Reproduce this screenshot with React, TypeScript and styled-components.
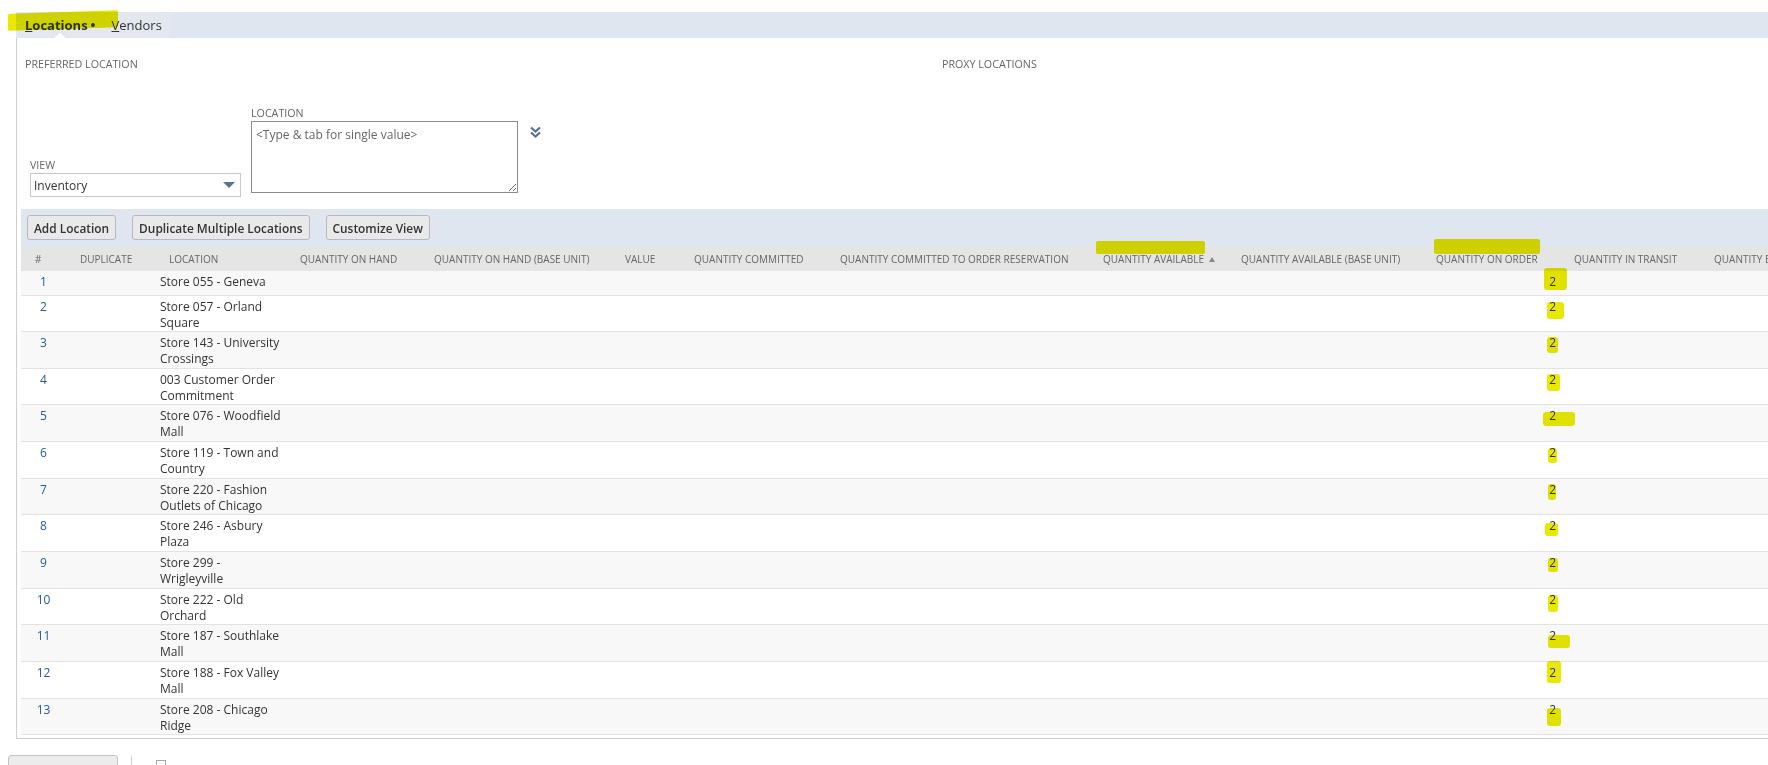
import React from "react";
import styled, { createGlobalStyle } from "styled-components";

const Global = createGlobalStyle`
  html, body { margin: 0; padding: 0; background: #fff; }
  body { font-family: "Open Sans", "Liberation Sans", Arial, sans-serif; color: #333; }
  * { box-sizing: border-box; }
`;

const Page = styled.div`
  position: relative;
  width: 1768px;
  height: 765px;
  overflow: hidden;
  padding-top: 12px;
`;

const TabBar = styled.div`
  margin-left: 16px;
  height: 26px;
  background: #dfe6ef;
  display: flex;
`;

const TabGroup = styled.div`
  width: 154px;
  background: #e3e7ee;
  display: flex;
  align-items: center;
  padding-left: 9px;
  gap: 16px;
`;

const Tab = styled.div<{ $active?: boolean }>`
  position: relative;
  height: 100%;
  display: flex;
  align-items: center;
  font-size: 13px;
  font-weight: ${(p) => (p.$active ? 700 : 400)};
  color: #333;
  white-space: nowrap;
  u { text-decoration: underline; text-underline-offset: 1px; }
  ${(p) =>
    p.$active &&
    `&::after {
      content: "";
      position: absolute;
      left: 29px;
      bottom: 0;
      border-left: 6px solid transparent;
      border-right: 6px solid transparent;
      border-bottom: 5px solid #fff;
    }`}
`;

const Dot = styled.span`
  margin-left: 3px;
  font-weight: 700;
`;

const Panel = styled.div`
  margin-left: 16px;
  border-left: 1px solid #cfcfcf;
  border-bottom: 1px solid #cfcfcf;
  padding: 0 0 3px 4px;
`;

const FormArea = styled.div`
  height: 171px;
  display: grid;
  grid-template-columns: 917px 1fr;
  padding-left: 4px;
`;

const FormCol = styled.div`
  display: flex;
  flex-direction: column;
  padding-top: 19px;
  padding-bottom: 12px;
`;

const SectionLabel = styled.div`
  font-size: 10.7px;
  line-height: 14px;
  color: #666;
  text-transform: uppercase;
`;

const FieldsRow = styled.div`
  margin-top: auto;
  display: flex;
  align-items: flex-end;
  padding-left: 5px;
  gap: 10px;
`;

const Field = styled.div<{ $lift?: number }>`
  display: flex;
  flex-direction: column;
  gap: 1px;
  margin-bottom: ${(p) => p.$lift ?? 0}px;
`;

const FieldLabel = styled.label`
  font-size: 10.7px;
  line-height: 14px;
  color: #666;
  text-transform: uppercase;
`;

const FakeSelect = styled.div`
  width: 211px;
  height: 24px;
  border: 1px solid #c8c8c8;
  display: flex;
  align-items: center;
  justify-content: space-between;
  padding: 0 4px 0 3px;
  font-size: 12px;
  color: #333;
`;

const Caret = styled.span`
  width: 0;
  height: 0;
  border-left: 6px solid transparent;
  border-right: 6px solid transparent;
  border-top: 6px solid #5b7290;
  margin-right: 1px;
`;

const TextArea = styled.textarea`
  width: 267px;
  height: 72px;
  border: 1px solid #8c8c8c;
  padding: 4px 4px;
  font-family: "Open Sans", "Liberation Sans", Arial, sans-serif;
  font-size: 12px;
  color: #333;
  resize: both;
  outline: none;
  &::placeholder { color: #666; }
`;

const ExpandIcon = styled.svg`
  align-self: flex-start;
  margin-top: 20px;
  margin-left: 2px;
`;

const ProxyCol = styled(FormCol)`
  padding-left: 0;
`;

const ButtonBar = styled.div`
  height: 37px;
  background: #dfe6ef;
  display: flex;
  align-items: center;
  gap: 16px;
  padding-left: 6px;
`;

const Button = styled.button`
  height: 25px;
  padding: 0 6px;
  border: 1px solid #b9b9b9;
  border-radius: 3px;
  background: #e9e9e9;
  font-family: "Open Sans", "Liberation Sans", Arial, sans-serif;
  font-size: 11.9px;
  font-weight: 600;
  color: #333;
  white-space: nowrap;
`;

const Table = styled.table`
  border-collapse: collapse;
  table-layout: fixed;
  width: 1883px;
`;

const Th = styled.th<{ $indent: number }>`
  height: 25px;
  background: #e5e5e5;
  font-size: 10px;
  font-weight: 400;
  color: #666;
  text-align: left;
  padding: 0 0 0 ${(p) => p.$indent}px;
  white-space: nowrap;
  overflow: hidden;
`;

const SortArrow = styled.span`
  display: inline-block;
  margin-left: 5px;
  width: 0;
  height: 0;
  border-left: 3px solid transparent;
  border-right: 3px solid transparent;
  border-bottom: 5px solid #888;
  vertical-align: 1px;
`;

const Tr = styled.tr<{ $odd: boolean; $tall: boolean }>`
  height: ${(p) => (p.$tall ? "36.67px" : "24px")};
  background: ${(p) => (p.$odd ? "#f8f8f8" : "#fff")};
  border-bottom: 1px solid #e3e3e3;
`;

const Td = styled.td<{ $align?: string }>`
  vertical-align: top;
  padding: 3px ${(p) => (p.$align === "right" ? "8px" : "0")} 0 ${(p) => (p.$align === "left" ? "10px" : "0")};
  text-align: ${(p) => p.$align ?? "left"};
  font-size: 12px;
  line-height: 16px;
  color: #333;
  white-space: nowrap;
`;

const NumCell = styled(Td)`
  text-align: center;
  padding-right: 4px;
  color: #255a9b;
`;

const Line = styled.div`
  white-space: nowrap;
`;

const Digit = styled.span`
  position: relative;
  display: inline-block;
`;

const Mark = styled.span`
  position: absolute;
  background: #e8e800;
  mix-blend-mode: multiply;
  border-radius: 3px;
  pointer-events: none;
`;

const Highlight = styled.div`
  position: absolute;
  background: #e8e800;
  mix-blend-mode: multiply;
  border-radius: 2px;
  pointer-events: none;
`;

const Footer = styled.div`
  display: flex;
  align-items: flex-start;
  padding: 16px 0 0 8px;
  gap: 13px;
`;

const FooterButton = styled.div`
  width: 110px;
  height: 20px;
  border: 1px solid #c4c4c4;
  border-radius: 3px;
  background: #ececec;
`;

const Separator = styled.div`
  width: 1px;
  height: 20px;
  margin-top: 1px;
  background: #cfcfcf;
`;

const SmallBox = styled.div`
  width: 10px;
  height: 10px;
  margin: 5px 0 0 11px;
  border: 1px solid #aaa;
`;

const columns: { label: string; width: number; indent: number; sorted?: boolean }[] = [
  { label: "#", width: 49, indent: 14 },
  { label: "DUPLICATE", width: 80, indent: 10 },
  { label: "LOCATION", width: 140, indent: 19 },
  { label: "QUANTITY ON HAND", width: 134, indent: 10 },
  { label: "QUANTITY ON HAND (BASE UNIT)", width: 191, indent: 10 },
  { label: "VALUE", width: 69, indent: 10 },
  { label: "QUANTITY COMMITTED", width: 146, indent: 10 },
  { label: "QUANTITY COMMITTED TO ORDER RESERVATION", width: 263, indent: 10 },
  { label: "QUANTITY AVAILABLE", width: 138, indent: 10, sorted: true },
  { label: "QUANTITY AVAILABLE (BASE UNIT)", width: 195, indent: 10 },
  { label: "QUANTITY ON ORDER", width: 138, indent: 10 },
  { label: "QUANTITY IN TRANSIT", width: 140, indent: 10 },
  { label: "QUANTITY BACK ORDERED", width: 200, indent: 10 },
];

type Row = { lines: string[]; mark: [number, number, number, number] };

const rows: Row[] = [
  { lines: ["Store 055 - Geneva"], mark: [-8, -14, 23, 22] },
  { lines: ["Store 057 - Orland", "Square"], mark: [-5, -5, 17, 17] },
  { lines: ["Store 143 - University", "Crossings"], mark: [-5, -6, 11, 16] },
  { lines: ["003 Customer Order", "Commitment"], mark: [-5, -6, 13, 17] },
  { lines: ["Store 076 - Woodfield", "Mall"], mark: [-9, -4, 32, 14] },
  { lines: ["Store 119 - Town and", "Country"], mark: [-4, -5, 9, 15] },
  { lines: ["Store 220 - Fashion", "Outlets of Chicago"], mark: [-4, -6, 8, 16] },
  { lines: ["Store 246 - Asbury", "Plaza"], mark: [-7, -3, 13, 13] },
  { lines: ["Store 299 -", "Wrigleyville"], mark: [-4, -5, 10, 14] },
  { lines: ["Store 222 - Old", "Orchard"], mark: [-4, -5, 10, 17] },
  { lines: ["Store 187 - Southlake", "Mall"], mark: [-4, -1, 22, 13] },
  { lines: ["Store 188 - Fox Valley", "Mall"], mark: [-5, -12, 14, 22] },
  { lines: ["Store 208 - Chicago", "Ridge"], mark: [-5, -2, 14, 18] },
];

const DoubleChevron = () => (
  <ExpandIcon width="11" height="12" viewBox="0 0 11 12">
    <path d="M1 1.5 L5.5 5.5 L10 1.5" fill="none" stroke="#56709a" strokeWidth="2.2" />
    <path d="M1 6.5 L5.5 10.5 L10 6.5" fill="none" stroke="#56709a" strokeWidth="2.2" />
  </ExpandIcon>
);

export default function App() {
  return (
    <Page>
      <Global />
      <TabBar>
        <TabGroup>
          <Tab $active>
            <u>L</u>ocations<Dot>•</Dot>
          </Tab>
          <Tab>
            <u>V</u>endors
          </Tab>
        </TabGroup>
      </TabBar>
      <Panel>
        <FormArea>
          <FormCol>
            <SectionLabel>Preferred Location</SectionLabel>
            <FieldsRow>
              <Field>
                <FieldLabel>View</FieldLabel>
                <FakeSelect>
                  <span>Inventory</span>
                  <Caret />
                </FakeSelect>
              </Field>
              <Field $lift={4}>
                <FieldLabel>Location</FieldLabel>
                <TextArea placeholder="<Type & tab for single value>" />
              </Field>
              <DoubleChevron />
            </FieldsRow>
          </FormCol>
          <ProxyCol>
            <SectionLabel>Proxy Locations</SectionLabel>
          </ProxyCol>
        </FormArea>
        <ButtonBar>
          <Button>Add Location</Button>
          <Button>Duplicate Multiple Locations</Button>
          <Button>Customize View</Button>
        </ButtonBar>
        <Table>
          <colgroup>
            {columns.map((c) => (
              <col key={c.label} style={{ width: c.width }} />
            ))}
          </colgroup>
          <thead>
            <tr>
              {columns.map((c) => (
                <Th key={c.label} $indent={c.indent}>
                  {c.label}
                  {c.sorted && <SortArrow />}
                </Th>
              ))}
            </tr>
          </thead>
          <tbody>
            {rows.map((r, i) => (
              <Tr key={i} $odd={i % 2 === 0} $tall={r.lines.length > 1}>
                <NumCell>{i + 1}</NumCell>
                <Td />
                <Td $align="left">
                  {r.lines.map((l) => (
                    <Line key={l}>{l}</Line>
                  ))}
                </Td>
                <Td />
                <Td />
                <Td />
                <Td />
                <Td />
                <Td />
                <Td />
                <Td $align="right">
                  <Digit>
                    2
                    <Mark
                      style={{
                        left: r.mark[0] + 3,
                        top: r.mark[1] + 8,
                        width: r.mark[2],
                        height: r.mark[3],
                      }}
                    />
                  </Digit>
                </Td>
                <Td />
                <Td />
              </Tr>
            ))}
          </tbody>
        </Table>
      </Panel>
      <Footer>
        <FooterButton />
        <Separator />
        <SmallBox />
      </Footer>
      <Highlight style={{ left: 8, top: 12, width: 110, height: 17, transform: "skewY(-2deg)" }} />
      <Highlight style={{ left: 1096, top: 241, width: 109, height: 13 }} />
      <Highlight style={{ left: 1434, top: 239, width: 106, height: 15 }} />
    </Page>
  );
}
